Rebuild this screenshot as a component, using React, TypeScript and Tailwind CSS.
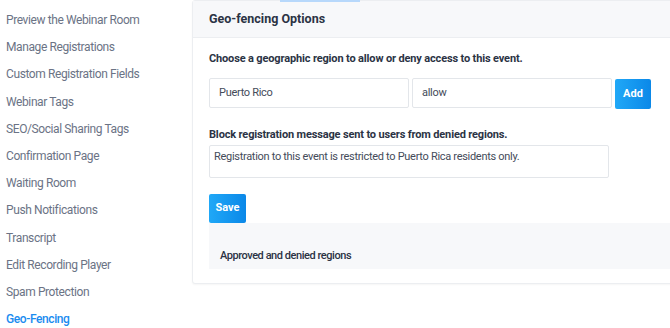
export default function App() {
  const items = [
    "Preview the Webinar Room",
    "Manage Registrations",
    "Custom Registration Fields",
    "Webinar Tags",
    "SEO/Social Sharing Tags",
    "Confirmation Page",
    "Waiting Room",
    "Push Notifications",
    "Transcript",
    "Edit Recording Player",
    "Spam Protection",
    "Geo-Fencing",
  ];
  return (
    <div className="flex w-[670px] h-[328px] overflow-hidden bg-white" style={{ fontFamily: "Roboto, 'Noto Sans', sans-serif" }}>
      <div className="w-[192px] shrink-0 pt-[7px] pl-[6px]">
        {items.map((it, i) => (
          <div
            key={it}
            className={`h-[27.2px] leading-[27px] text-[12px] tracking-[-0.4px] ${i === items.length - 1 ? "text-[#1a8cf0] font-medium" : "text-[#6b7385]"}`}
          >
            {it}
          </div>
        ))}
      </div>
      <div className="flex-1 min-w-0">
        <div className="w-[490px] h-[284px] border border-[#eceef1] rounded-[3px] shadow-[0_1px_2px_rgba(0,0,0,0.04)] bg-white relative">
          <div className="absolute top-[-1px] left-[87px] w-[80px] h-[2px] bg-[#b7d8fb]" />
          <div className="h-[37px] bg-[#f7f8fa] border-b border-[#eceef1] flex items-center pl-[16px]">
            <span className="text-[12.5px] font-bold text-[#2b3344]">Geo-fencing Options</span>
          </div>
          <div className="pl-[16px]">
            <div className="mt-[12px] text-[11px] font-bold tracking-[-0.15px] text-[#2b3344] leading-[18px]">
              Choose a geographic region to allow or deny access to this event.
            </div>
            <div className="mt-[10px] flex items-start gap-[3px]">
              <div className="w-[200px] h-[30px] border border-[#e3e6ea] rounded-[2px] flex items-center pl-[9px] text-[11px] tracking-[-0.3px] text-[#444b5a]">
                Puerto Rico
              </div>
              <div className="w-[200px] h-[30px] border border-[#e3e6ea] rounded-[2px] flex items-center pl-[9px] text-[11px] tracking-[-0.3px] text-[#444b5a]">
                allow
              </div>
              <div className="w-[36px] h-[30px] mt-[1px] rounded-[2px] bg-gradient-to-r from-[#20a8f7] to-[#0b88e8] flex items-center justify-center text-white text-[11px] font-bold">
                Add
              </div>
            </div>
            <div className="mt-[17px] text-[11px] font-bold tracking-[-0.15px] text-[#2b3344] leading-[18px]">
              Block registration message sent to users from denied regions.
            </div>
            <div className="mt-[1px] w-[400px] h-[33px] border border-[#e3e6ea] rounded-[2px] pl-[4px] pt-[2px] text-[11px] tracking-[-0.3px] text-[#444b5a] leading-[18px]">
              Registration to this event is restricted to Puerto Rica residents only.
            </div>
            <div className="mt-[16px] w-[37px] h-[29px] rounded-[2px] bg-gradient-to-r from-[#20a8f7] to-[#0b88e8] flex items-center justify-center text-white text-[11px] font-bold">
              Save
            </div>
            <div className="h-[46px] bg-[#f7f8fa] flex items-end pb-[4px] pl-[11px]">
              <span className="text-[11px] font-medium tracking-[-0.45px] text-[#2b3344] leading-[18px]">Approved and denied regions</span>
            </div>
          </div>
        </div>
      </div>
    </div>
  );
}
